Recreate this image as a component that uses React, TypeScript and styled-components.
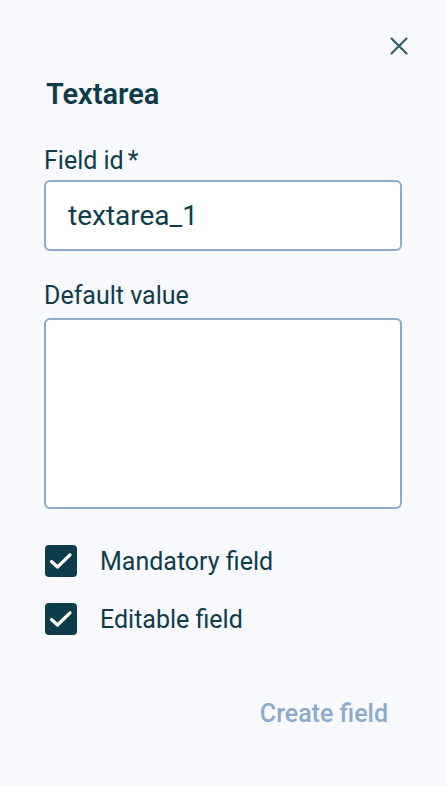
import styled, { createGlobalStyle } from "styled-components";

const colors = {
  BG: "#f7f9fd",
  TEXT: "#0f3c4a",
  ICON: "#2e5967",
  BORDER: "#8eaac9",
  MUTED: "#8eaacb",
};

const GlobalStyle = createGlobalStyle`
  html, body {
    margin: 0;
    padding: 0;
    background: ${colors.BG};
  }
  body {
    font-family: Roboto, "Liberation Sans", sans-serif;
    color: ${colors.TEXT};
  }
  * {
    box-sizing: border-box;
  }
`;

const CheckIcon = () => (
  <svg width="32" height="32" viewBox="0 0 32 32" fill="none">
    <polyline
      points="6.5,16.5 12.5,22 25,9.8"
      stroke="#ffffff"
      strokeWidth="3.2"
      strokeLinecap="round"
      strokeLinejoin="round"
    />
  </svg>
);

const CloseIcon = () => (
  <svg width="20" height="20" viewBox="0 0 20 20" fill="none">
    <path
      d="M2.5 2.5L17.5 17.5M17.5 2.5L2.5 17.5"
      stroke={colors.ICON}
      strokeWidth="2.1"
      strokeLinecap="round"
    />
  </svg>
);

const App = () => {
  return (
    <>
      <GlobalStyle />
      <Panel>
        <CloseRow>
          <CloseButton type="button" aria-label="Close">
            <CloseIcon />
          </CloseButton>
        </CloseRow>
        <Title>Textarea</Title>
        <Form>
          <Field>
            <Label $space={5}>
              Field id<span>*</span>
            </Label>
            <Input defaultValue="textarea_1" />
          </Field>
          <Field>
            <Label $space={8}>Default value</Label>
            <TextArea />
          </Field>
          <Checks>
            <CheckRow>
              <Box>
                <CheckIcon />
              </Box>
              Mandatory field
            </CheckRow>
            <CheckRow>
              <Box>
                <CheckIcon />
              </Box>
              Editable field
            </CheckRow>
          </Checks>
        </Form>
        <Footer>
          <CreateButton type="button">Create field</CreateButton>
        </Footer>
      </Panel>
    </>
  );
};

const Panel = styled.div`
  width: 446px;
  min-height: 786px;
  padding: 0 44px;
  background: ${colors.BG};
`;

const CloseRow = styled.div`
  display: flex;
  justify-content: flex-end;
  padding-top: 36px;
  margin-right: -7px;
`;

const CloseButton = styled.button`
  display: flex;
  padding: 0;
  border: none;
  background: none;
  cursor: pointer;
`;

const Title = styled.h2`
  margin: 21px 0 0 2px;
  font-size: 29px;
  line-height: 34px;
  font-weight: 600;
  color: ${colors.TEXT};
`;

const Form = styled.div`
  display: flex;
  flex-direction: column;
  margin-top: 35px;
`;

const Field = styled.div`
  display: flex;
  flex-direction: column;
  margin-bottom: 30px;
`;

const Label = styled.label<{ $space: number }>`
  margin-bottom: ${(p) => p.$space}px;
  font-size: 25px;
  line-height: 29px;
  span {
    margin-left: 4px;
  }
`;

const Input = styled.input`
  width: 100%;
  height: 71px;
  padding: 0 22px;
  border: 2px solid ${colors.BORDER};
  border-radius: 6px;
  background: #ffffff;
  font-family: inherit;
  font-size: 28px;
  color: ${colors.TEXT};
  outline: none;
`;

const TextArea = styled.textarea`
  width: 100%;
  height: 191px;
  padding: 14px 22px;
  border: 2px solid ${colors.BORDER};
  border-radius: 6px;
  background: #ffffff;
  font-family: inherit;
  font-size: 28px;
  color: ${colors.TEXT};
  resize: none;
  outline: none;
`;

const Checks = styled.div`
  display: flex;
  flex-direction: column;
  gap: 26px;
  margin-top: 6px;
`;

const CheckRow = styled.label`
  display: flex;
  align-items: center;
  gap: 23px;
  font-size: 25px;
  line-height: 29px;
`;

const Box = styled.span`
  display: flex;
  width: 32px;
  height: 32px;
  margin-left: 1px;
  border-radius: 4px;
  background: ${colors.TEXT};
`;

const Footer = styled.div`
  display: flex;
  justify-content: flex-end;
  margin-top: 64px;
`;

const CreateButton = styled.button`
  padding: 0 14px 0 0;
  border: none;
  background: none;
  font-family: inherit;
  font-size: 25px;
  line-height: 29px;
  font-weight: 500;
  color: ${colors.MUTED};
  cursor: pointer;
`;

export default App;
